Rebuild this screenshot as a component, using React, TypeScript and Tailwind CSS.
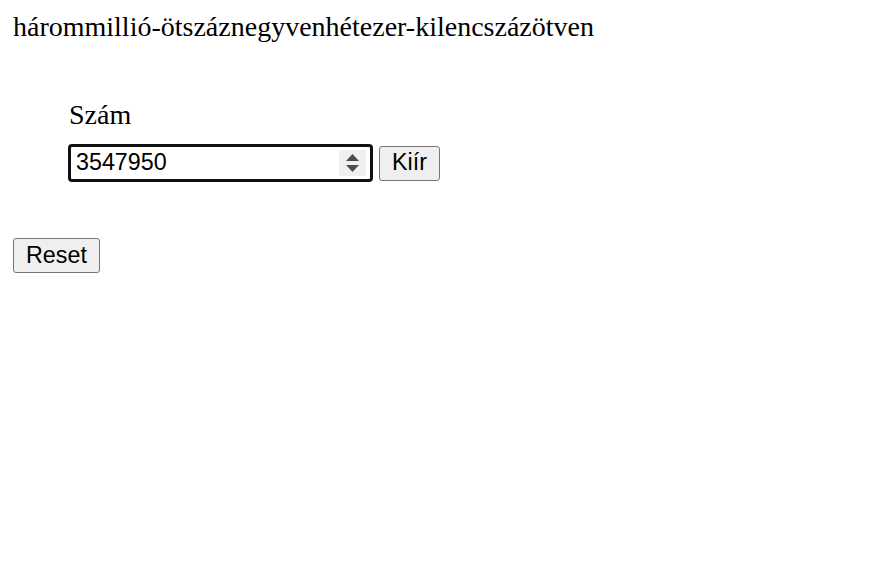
import React from "react";

const App = () => {
  return (
    <div className="min-h-screen bg-white px-[13px] pt-[11px] font-['Liberation_Serif',serif] text-[28px] leading-[32px] text-black">
      {/* result text */}
      <div>hárommillió-ötszáznegyvenhétezer-kilencszázötven</div>

      {/* form */}
      <div className="ml-[55px] mt-[56px]">
        <div className="pl-[1px] leading-[32px]">Szám</div>
        <div className="mt-[13px] flex items-center gap-[6px] font-['Liberation_Sans',Arial,sans-serif] text-[23.3px]">
          <div className="flex h-[38px] w-[305px] items-center rounded-[4px] border-[3px] border-[#101010] bg-white pl-[5px] pr-[4px]">
            <span className="flex-1 leading-none">3547950</span>
            <div className="flex h-[26px] w-[27px] flex-col items-center justify-center gap-[4px] bg-[#f0f0f0]">
              <svg width="13" height="7" viewBox="0 0 13 7">
                <path d="M0 7 L6.5 0 L13 7 Z" fill="#4d4d4d" />
              </svg>
              <svg width="13" height="7" viewBox="0 0 13 7">
                <path d="M0 0 L13 0 L6.5 7 Z" fill="#4d4d4d" />
              </svg>
            </div>
          </div>
          <button className="h-[35px] rounded-[3px] border border-[#767676] bg-[#efefef] px-[12px] leading-none text-black">
            Kiír
          </button>
        </div>
      </div>

      {/* reset */}
      <div className="mt-[56px]">
        <button className="h-[35px] rounded-[3px] border border-[#767676] bg-[#efefef] px-[12px] font-['Liberation_Sans',Arial,sans-serif] text-[23.3px] leading-none text-black">
          Reset
        </button>
      </div>
    </div>
  );
};

export default App;
